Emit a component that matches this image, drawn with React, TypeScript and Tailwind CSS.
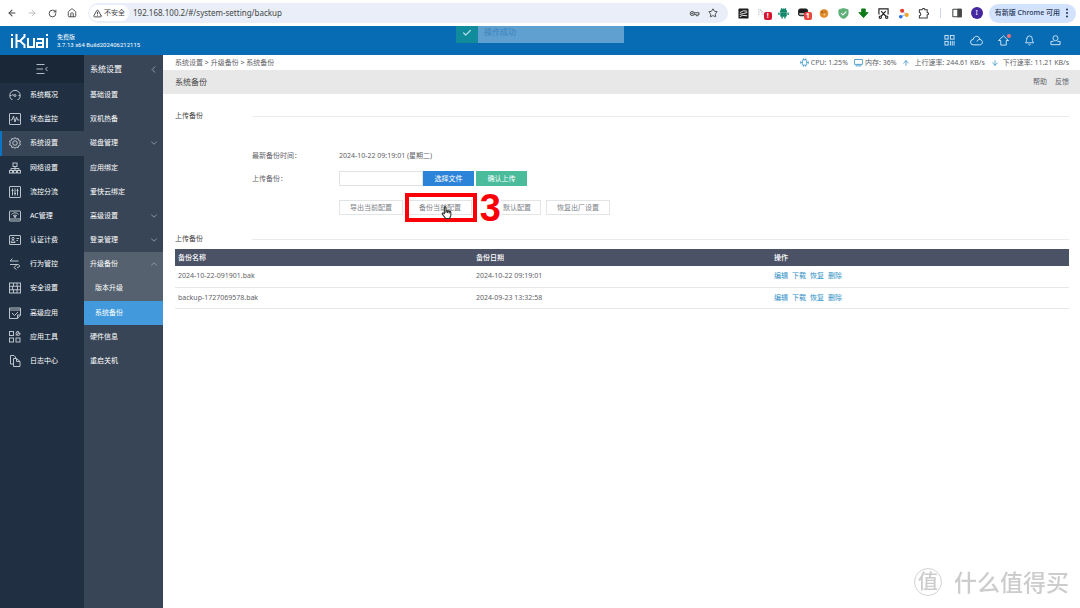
import type { ReactNode } from "react";
import clsx from "clsx";
import {
  LuArrowDown,
  LuArrowLeft,
  LuArrowRight,
  LuArrowUp,
  LuBell,
  LuCheck,
  LuChevronDown,
  LuChevronLeft,
  LuChevronUp,
  LuHouse,
  LuRotateCw,
  LuStar,
  LuTriangleAlert,
} from "react-icons/lu";

function Icon({
  children,
  className = "size-3",
  width = 1.9,
}: {
  children: ReactNode;
  className?: string;
  width?: number;
}) {
  return (
    <svg
      viewBox="0 0 24 24"
      fill="none"
      stroke="currentColor"
      strokeWidth={width}
      className={clsx("shrink-0", className)}
      aria-hidden="true"
    >
      {children}
    </svg>
  );
}

const mainMenu = [
  {
    title: "系统概况",
    icon: (
      <Icon>
        <path d="M7 21H5A10.500 10.500 0 1 1 19 21H17M2 13h3M19 13h3M6 11l4 2" />
        <circle cx="12" cy="13" r="2" />
      </Icon>
    ),
  },
  {
    title: "状态监控",
    icon: (
      <Icon>
        <rect x="1" y="1" width="22" height="22" rx="1" />
        <path d="M3 14h3l3-8 3 12 3-10 2 6h4" />
      </Icon>
    ),
  },
  {
    title: "系统设置",
    icon: (
      <Icon>
        <path d="M12 1l2.500 3 3.800-1 .9 3.900L23 8.500 21.300 12l1.700 3.500-3.800 1.600-.9 3.900-3.800-1L12 23l-2.500-3-3.800 1-.9-3.900L1 15.500 2.700 12 1 8.500l3.800-1.600.9-3.900 3.800 1z" />
        <circle cx="12" cy="12" r="4.500" />
      </Icon>
    ),
  },
  {
    title: "网络设置",
    icon: (
      <Icon>
        <rect x="8" y="2" width="8" height="7" />
        <path d="M12 9v8M4 17v-4h16v4" />
        <rect x="1" y="17" width="6" height="5" />
        <rect x="9" y="17" width="6" height="5" />
        <rect x="17" y="17" width="6" height="5" />
      </Icon>
    ),
  },
  {
    title: "流控分流",
    icon: (
      <Icon>
        <rect x="1" y="1" width="22" height="22" rx="1" />
        <path d="M7 5v14M12 5v14M17 5v14M5 9h4M10 15h4M15 9h4" />
      </Icon>
    ),
  },
  {
    title: "AC管理",
    icon: (
      <Icon>
        <rect x="1" y="2" width="22" height="20" rx="1" />
        <path d="M1 18h22M5 9c4-4.500 10-4.500 14 0M8 12c2-2.500 6-2.500 8 0" />
        <circle cx="12" cy="13.500" r="1.500" fill="currentColor" />
      </Icon>
    ),
  },
  {
    title: "认证计费",
    icon: (
      <Icon>
        <rect x="1" y="3" width="22" height="18" rx="1" />
        <circle cx="8" cy="9" r="2.300" />
        <path d="M4 17c0-5 8-5 8 0zM15 9h5M15 13h3" />
      </Icon>
    ),
  },
  {
    title: "行为管控",
    icon: (
      <Icon>
        <path d="M7 1L2 6h17M2 13h14c7 0 7 6 0 6M15 14l-5 5 5 4" />
      </Icon>
    ),
  },
  {
    title: "安全设置",
    icon: (
      <Icon>
        <rect x="1" y="2" width="22" height="20" />
        <path d="M1 8.500h22M1 15.500h22M9 2v6.500M16 2v6.500M7 8.500v7M17 8.500v7M9 15.500V22M16 15.500V22" />
      </Icon>
    ),
  },
  {
    title: "高级应用",
    icon: (
      <Icon>
        <path d="M1 2h22v14l-6 7H1zM1 6h22M23 16h-6v7M6 12l5 5 7-7" />
      </Icon>
    ),
  },
  {
    title: "应用工具",
    icon: (
      <Icon>
        <rect x="1" y="1" width="8" height="8" />
        <rect x="1" y="14" width="8" height="8" />
        <rect x="14" y="14" width="8" height="8" />
        <path d="M14 9l4-4M22 4a4 4 0 1 1-3-3l-1 4z" />
      </Icon>
    ),
  },
  {
    title: "日志中心",
    icon: (
      <Icon>
        <path d="M9 18H3V1h7l3 3v3M9 7h6l7 6v10H9zM15 7v6h7" />
      </Icon>
    ),
  },
];

const subMenu = [
  { title: "基础设置" },
  { title: "双机热备" },
  { title: "磁盘管理", arrow: "down" },
  { title: "应用绑定" },
  { title: "爱快云绑定" },
  { title: "高级设置", arrow: "down" },
  { title: "登录管理", arrow: "down" },
  { title: "升级备份", arrow: "up", open: true },
  { title: "版本升级", open: true, child: true },
  { title: "系统备份", child: true, active: true },
  { title: "硬件信息" },
  { title: "重启关机" },
];

const backups = [
  { name: "2024-10-22-091901.bak", date: "2024-10-22 09:19:01" },
  { name: "backup-1727069578.bak", date: "2024-09-23 13:32:58" },
];

const actions = ["编辑", "下载", "恢复", "删除"];

const extensions = [
  {
    label: "笔记",
    icon: (
      <Icon className="size-[11px] text-white" width={2}>
        <rect x="1" y="1" width="22" height="22" rx="2" fill="#1d1d1d" stroke="none" />
        <path d="M4 10l8-4 8 1M4 14l8-2 8-2M4 19l6-3 10 1" />
      </Icon>
    ),
  },
  {
    label: "鼠标手势",
    icon: (
      <Icon className="size-[11px] text-[#999999]" width={1.5}>
        <path d="M2 2v16M5 4l12 9-7 1z" strokeDasharray="3 2" />
      </Icon>
    ),
    badge: "!",
  },
  {
    label: "助手",
    icon: (
      <Icon className="size-[11px] text-[#13876b]" width={2}>
        <path d="M5 9a7 7 0 0 1 14 0z" fill="currentColor" />
        <path d="M6 11h12v7H6z" fill="currentColor" />
        <path d="M2 10v5M22 10v5M9 18v5M15 18v5M7 1l2 3M17 1l-2 3" strokeWidth="3" />
      </Icon>
    ),
  },
  {
    label: "脚本",
    icon: (
      <Icon className="size-[11px] text-[#1c1c1c]">
        <rect x="1" y="2" width="20" height="15" rx="4" fill="currentColor" />
        <path d="M3 13h10" stroke="white" strokeWidth="3" />
      </Icon>
    ),
    badge: "1",
  },
  {
    label: "Cookie",
    icon: (
      <Icon className="size-[10px] text-[#e08c2c]">
        <circle cx="12" cy="13" r="9.500" fill="currentColor" />
        <circle cx="8" cy="10" r="2" fill="#8b4a16" stroke="none" />
        <circle cx="15" cy="9" r="1.500" fill="#8b4a16" stroke="none" />
        <circle cx="13" cy="16" r="2" fill="#f9d28d" stroke="none" />
      </Icon>
    ),
  },
  {
    label: "防护",
    icon: (
      <Icon className="size-[11px] text-[#5eaf78]">
        <path d="M12 1l10 3v8c0 5-4 9-10 11C6 21 2 17 2 12V4z" fill="currentColor" />
        <path d="M7 11l4 4 7-7" stroke="white" strokeWidth="2.500" />
      </Icon>
    ),
  },
  {
    label: "下载",
    icon: (
      <Icon className="size-[11px] text-[#0b7a17]">
        <path d="M8 2h8v8h6L12 21 2 10h6z" fill="currentColor" />
      </Icon>
    ),
  },
  {
    label: "截图",
    icon: (
      <Icon className="size-[11px] text-[#222222]" width={2.500}>
        <path d="M2 14V2h20v12M7 7l10 11M17 7L7 18" />
        <circle cx="5" cy="20" r="2.500" />
        <circle cx="19" cy="20" r="2.500" />
      </Icon>
    ),
  },
  {
    label: "分享",
    icon: (
      <Icon className="size-[11px]">
        <path d="M8 5l10 9-12 5" stroke="#8fb1f0" strokeWidth="2" />
        <circle cx="9" cy="6" r="4.500" fill="#e8392d" stroke="none" />
        <circle cx="19" cy="15" r="4.500" fill="#f5a623" stroke="none" />
        <circle cx="6" cy="19" r="4" fill="#2f6fe4" stroke="none" />
      </Icon>
    ),
  },
  {
    label: "扩展程序",
    icon: (
      <Icon className="size-[11px] text-[#3c3c3c]" width={2.300}>
        <path d="M3 4h6c0-4 6-4 6 0h5v6c4 0 4 5 0 5v7H3v-5c4 0 4-7 0-7z" />
      </Icon>
    ),
  },
];

function BrowserBar() {
  return (
    <div className="flex h-[26px] items-center bg-white pr-1 pl-0.5 text-[#444746]">
      <button aria-label="返回" className="flex w-5 justify-center">
        <LuArrowLeft className="size-[10px]" strokeWidth={2.500} />
      </button>
      <button aria-label="前进" className="flex w-5 justify-center text-[#b0b2b4]">
        <LuArrowRight className="size-[10px]" />
      </button>
      <button aria-label="刷新" className="flex w-5 justify-center">
        <LuRotateCw className="size-[9px]" strokeWidth={2.500} />
      </button>
      <button aria-label="主页" className="flex w-5 justify-center">
        <LuHouse className="size-[10px]" strokeWidth={2.200} />
      </button>
      <div className="ml-1.5 flex h-5 flex-1 items-center rounded-full bg-[#e9eef8] pr-1.5 pl-px">
        <button className="flex h-4 items-center gap-0.5 rounded-full bg-white px-1 text-[7px]">
          <LuTriangleAlert className="size-[9px]" strokeWidth={2.500} />
          不安全
        </button>
        <input
          aria-label="地址"
          defaultValue="192.168.100.2/#/system-setting/backup"
          className="ml-1 min-w-0 flex-1 bg-transparent text-[8px] outline-none"
        />
        <button aria-label="密码" className="flex w-[18px] justify-center">
          <Icon className="h-[9px] w-[11px]" width={2.500}>
            <circle cx="6" cy="12" r="5.500" />
            <circle cx="6" cy="12" r="1.500" fill="currentColor" />
            <path d="M11 10h13v5h-3v3h-4v-3h-6" />
          </Icon>
        </button>
        <button aria-label="收藏" className="flex w-[18px] justify-center">
          <LuStar className="size-[10px]" strokeWidth={2.300} />
        </button>
      </div>
      <div className="ml-1.5 flex">
        {extensions.map((item) => (
          <button
            key={item.label}
            aria-label={item.label}
            className="relative flex w-5 justify-center"
          >
            {item.icon}
            {item.badge ? (
              <span
                className={clsx(
                  "absolute top-1 right-0.5 flex size-2 items-center justify-center rounded-xs text-[7px] leading-none font-bold text-white",
                  item.badge === "!" ? "bg-[#d3182f]" : "bg-[#e8453c]"
                )}
              >
                {item.badge}
              </span>
            ) : null}
          </button>
        ))}
      </div>
      <span className="mx-1.5 h-2.5 w-px bg-[#c9d8f0]" />
      <button aria-label="侧边栏" className="flex w-5 justify-center">
        <Icon className="size-[10px]" width={2.500}>
          <rect x="2" y="3" width="20" height="18" rx="1" />
          <path d="M14 3h8v18h-8z" fill="currentColor" />
        </Icon>
      </button>
      <button className="mr-1.5 ml-1 flex size-3 items-center justify-center rounded-full bg-[#4527a0] text-[7px] text-white">
        I
      </button>
      <button className="flex h-[19px] items-center gap-1 rounded-full bg-[#d3e3fd] px-1.5 text-[7px] font-medium text-[#1f3354]">
        有新版 Chrome 可用
        <Icon className="h-2.5 w-1.5" width={0}>
          <circle cx="12" cy="-2" r="4" fill="currentColor" />
          <circle cx="12" cy="12" r="4" fill="currentColor" />
          <circle cx="12" cy="26" r="4" fill="currentColor" />
        </Icon>
      </button>
    </div>
  );
}

function Header() {
  return (
    <header className="relative flex h-[29px] items-center bg-[#086cb5] pr-[19px] pl-2.5 text-white">
      <svg
        viewBox="0 0 39 14"
        className="h-3.5 w-[39px]"
        fill="none"
        stroke="white"
        strokeWidth="2"
        role="img"
        aria-label="iKuai"
      >
        <path d="M2 4v10M2 0v2M6.500 0v14M14.500 0v2.500L10 7H7M10 7l4.500 4V14M18 4v9h6M24 4v10M27 5h6v8h-6V9h6M37 4v10M37 0v2" />
      </svg>
      <div className="ml-2 text-[6px] leading-[8px]">
        <p>免费版</p>
        <p className="font-['Roboto',sans-serif]">3.7.13 x64 Build202406212115</p>
      </div>
      <nav className="ml-auto flex items-center gap-[15px] text-[#d5e8f6]">
        <button aria-label="应用">
          <Icon className="size-[11px]" width={2}>
            <rect x="2" y="1" width="7" height="8" />
            <rect x="14" y="1" width="8" height="8" />
            <rect x="2" y="14" width="7" height="8" />
            <path d="M14 13v10M18 13v10M22 13v10" />
          </Icon>
        </button>
        <button aria-label="云平台">
          <Icon className="size-[13px]" width={1.800}>
            <path d="M6 20a5 5 0 0 1 0-10c1-8 12-7 12 0 7 1 6 10 0 10zM18 10c-3 0-5 2-5 4" />
          </Icon>
        </button>
        <button aria-label="升级" className="relative">
          <Icon className="size-[11px]" width={2}>
            <path d="M12 2L1 12h5v10h12V12h5z" />
          </Icon>
          <span className="absolute -top-px -right-0.5 size-1 rounded-full bg-[#f5716e]" />
        </button>
        <button aria-label="通知">
          <LuBell className="size-[11px]" />
        </button>
        <button aria-label="用户">
          <Icon className="size-[11px]" width={2}>
            <circle cx="12" cy="7" r="5.500" />
            <path d="M8 14H2v7h20v-7h-6" />
          </Icon>
        </button>
      </nav>
      <div
        role="status"
        className="absolute top-0 left-1/2 flex h-[17px] w-[168px] -translate-x-1/2 bg-[#5fa0d0] text-[8px] leading-[11px] text-[#3b82bb]"
      >
        <span className="mr-1.5 flex w-[22px] items-center justify-center bg-[#108b9b] pb-1 text-[#b4dfe6]">
          <LuCheck className="size-[10px]" strokeWidth={3} />
        </span>
        操作成功
      </div>
    </header>
  );
}

function MainNav() {
  return (
    <nav className="w-[84px] shrink-0 bg-[#203042] text-white">
      <button
        aria-label="收起菜单"
        className="flex h-7 w-full items-center justify-center bg-[#1a2737] text-[#c7ccd3]"
      >
        <Icon className="size-3" width={1.800}>
          <path d="M1 3h16M1 12h13M1 21h16M23 8l-4 4 4 4" />
        </Icon>
      </button>
      <ul className="flex h-[290px] flex-col">
        {mainMenu.map((item) => (
          <li key={item.title} className="flex-1">
            <a
              href="#"
              className={clsx(
                "flex h-full items-center gap-[9px] border-l-2 pl-[7px]",
                item.title === "系统设置"
                  ? "border-[#0b74c4] bg-[#384556]"
                  : "border-transparent"
              )}
            >
              <span className="text-[#c5cbd2]">{item.icon}</span>
              {item.title}
            </a>
          </li>
        ))}
      </ul>
    </nav>
  );
}

function SubNav() {
  return (
    <nav className="w-[79px] shrink-0 bg-[#384556] text-white">
      <h2 className="flex h-7 items-center justify-between pr-1 pl-1.5 text-[8px]">
        系统设置
        <LuChevronLeft className="size-[11px] text-[#9aa4b0]" />
      </h2>
      <ul className="flex h-[290px] flex-col">
        {subMenu.map((item) => (
          <li key={item.title} className="flex-1">
            <a
              href="#"
              className={clsx(
                "flex h-full items-center justify-between pr-1",
                item.child ? "pl-[11px]" : "pl-1.5",
                item.open && "bg-[#56616f]",
                item.active && "bg-[#429add]"
              )}
            >
              {item.title}
              {item.arrow === "down" ? (
                <LuChevronDown className="size-[10px] text-[#9aa4b0]" />
              ) : null}
              {item.arrow === "up" ? (
                <LuChevronUp className="size-[10px] text-[#9aa4b0]" />
              ) : null}
            </a>
          </li>
        ))}
      </ul>
    </nav>
  );
}

function StatusBar() {
  return (
    <div className="flex h-[15px] items-center pr-[11px] pl-3">
      <p className="mr-auto">系统设置 &gt; 升级备份 &gt; 系统备份</p>
      <div className="flex items-center gap-1.5">
        <span className="flex items-center gap-0.5">
          <Icon className="size-[9px] text-[#3f97c7]" width={2.400}>
            <rect x="6" y="5" width="12" height="14" rx="2" />
            <path d="M1 9v6M23 9v6M3 12h3M18 12h3M9 1v4M15 1v4M9 19v4M15 19v4" />
          </Icon>
          CPU: 1.25%
        </span>
        <span className="flex items-center gap-0.5">
          <Icon className="size-[9px] text-[#3f97c7]" width={2.400}>
            <rect x="1" y="4" width="22" height="13" rx="1" />
            <path d="M4 21h16" />
          </Icon>
          内存: 36%
        </span>
        <span className="flex items-center gap-1">
          <LuArrowUp className="size-2 text-[#3f97c7]" strokeWidth={2.500} />
          上行速率: 244.61 KB/s
        </span>
        <span className="flex items-center gap-1">
          <LuArrowDown className="size-2 text-[#3f97c7]" strokeWidth={2.500} />
          下行速率: 11.21 KB/s
        </span>
      </div>
    </div>
  );
}

function SectionTitle({ title }: { title: string }) {
  return (
    <div className="flex h-4 items-center">
      <h3 className="w-[77px] text-[#444444]">{title}</h3>
      <span className="h-px flex-1 bg-[#ebebeb]" />
    </div>
  );
}

const outlineButton =
  "h-[15px] w-16 border border-[#e2e4e6] bg-white text-center text-[#7d8287]";

function BackupForm() {
  return (
    <form className="pt-6 pl-[77px]">
      <div className="flex h-4 items-center">
        <span className="w-[87px]">最新备份时间：</span>
        <span>2024-10-22 09:19:01 (星期二)</span>
      </div>
      <div className="mt-[7px] flex items-center">
        <label htmlFor="upload" className="w-[87px]">
          上传备份：
        </label>
        <input
          id="upload"
          type="text"
          className="h-[15px] w-[84px] border border-[#e0e2e4] px-1 outline-none"
        />
        <button type="button" className="h-[15px] w-[51px] bg-[#2c84d8] text-white">
          选择文件
        </button>
        <button type="button" className="ml-0.5 h-[15px] w-[51px] bg-[#4abc9b] text-white">
          确认上传
        </button>
      </div>
      <div className="mt-3.5 flex gap-[5px] pl-[87px]">
        <button type="button" className={outlineButton}>
          导出当前配置
        </button>
        <div className="relative flex">
          <button type="button" className={outlineButton}>
            备份当前配置
          </button>
          {/* step marker with pointer */}
          <span className="absolute -top-[7px] -left-[3px] z-10 h-[29px] w-[72px] border-4 border-[#fb0007]" />
          <span className="absolute -top-[7px] left-[69px] z-10 flex h-[29px] w-6 items-center justify-end bg-white font-['Liberation_Sans',sans-serif] text-[38px] leading-none font-bold text-[#fb0007]">
            3
          </span>
          <svg
            viewBox="0 0 20 24"
            className="absolute top-1.5 left-[33px] z-20 h-[13px] w-[11px]"
            fill="white"
            stroke="#333333"
            strokeWidth="2"
            aria-hidden="true"
          >
            <path d="M6 15V3c0-2.500 3-2.500 3 0v7c0-2 3-2 3 0 0-2 3-1.500 3 1 0-2 3-1.500 3 1v5c0 3-2 3-2 6H8c0-3-6-6-6-9 0-2 3-1 4 1zM9 10v3M12 10v3M15 11v3" />
          </svg>
        </div>
        <button type="button" className={clsx(outlineButton, "pl-4")}>
          默认配置
        </button>
        <button type="button" className={outlineButton}>
          恢复出厂设置
        </button>
      </div>
    </form>
  );
}

function BackupTable() {
  return (
    <table className="mt-0.5 w-full table-fixed text-left">
      <thead>
        <tr className="h-[17px] bg-[#4b5266] text-white">
          <th className="pl-[3px] font-medium">备份名称</th>
          <th className="pl-[3px] font-medium">备份日期</th>
          <th className="pl-[3px] font-medium">操作</th>
        </tr>
      </thead>
      <tbody>
        {backups.map((item) => (
          <tr key={item.name} className="h-[21px] border-b border-[#e6e6e6]">
            <td className="pl-[3px]">{item.name}</td>
            <td className="pl-[3px]">{item.date}</td>
            <td className="pl-[3px]">
              <div className="flex gap-1 text-[#2f8fc5]">
                {actions.map((action) => (
                  <a key={action} href="#">
                    {action}
                  </a>
                ))}
              </div>
            </td>
          </tr>
        ))}
      </tbody>
    </table>
  );
}

export default function App() {
  return (
    <div className="flex min-h-screen flex-col bg-white font-['Noto_Sans','Noto_Sans_CJK_SC',sans-serif] text-[7px] leading-[10px] text-[#5f6368]">
      <BrowserBar />
      <Header />
      <div className="flex flex-1">
        <MainNav />
        <SubNav />
        <main className="min-w-0 flex-1">
          <StatusBar />
          <div className="flex h-6 items-center gap-2 bg-[#e8e8e8] pr-[11px] pl-3">
            <h1 className="mr-auto text-[8px] text-[#444444]">系统备份</h1>
            <a href="#">帮助</a>
            <a href="#">反馈</a>
          </div>
          <div className="pt-3.5 pr-[11px] pl-3">
            <SectionTitle title="上传备份" />
            <BackupForm />
            <div className="pt-4">
              <SectionTitle title="上传备份" />
              <BackupTable />
            </div>
          </div>
        </main>
      </div>
      <div className="pointer-events-none fixed right-[11px] bottom-2.5 flex items-center gap-3 text-[#cccccc]">
        <span className="flex size-7 items-center justify-center rounded-full border border-[#d2d2d2] text-[20px] leading-none font-medium">
          值
        </span>
        <span className="text-[23px] leading-8 font-medium">什么值得买</span>
      </div>
    </div>
  );
}
